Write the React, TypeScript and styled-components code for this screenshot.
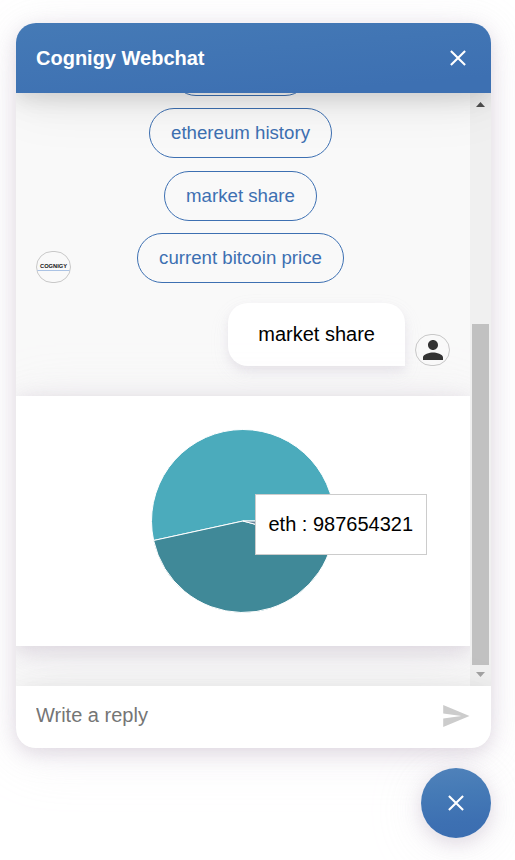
import React from "react";
import styled, { createGlobalStyle } from "styled-components";

const Global = createGlobalStyle`
  * { box-sizing: border-box; }
  body {
    margin: 0;
    background: #fff;
    overflow: hidden;
    font-family: "Liberation Sans", Arial, sans-serif;
    font-size: 20px;
    color: #000;
  }
`;

const Page = styled.div`
  height: 860px;
  padding: 23px 24px 22px 16px;
  display: flex;
  flex-direction: column;
  align-items: flex-end;
  gap: 20px;
`;

const ChatWindow = styled.section`
  width: 475px;
  height: 725px;
  display: flex;
  flex-direction: column;
  border-radius: 20px;
  overflow: hidden;
  background: #f9f9f9;
  box-shadow:
    0 5px 18px 0 rgba(151, 124, 156, 0.2),
    0 5px 32px 0 rgba(203, 195, 212, 0.2),
    0 8px 58px 0 rgba(216, 212, 221, 0.2);
`;

const Header = styled.header`
  position: relative;
  z-index: 2;
  height: 70px;
  flex: none;
  padding: 0 24.5px 0 20px;
  display: flex;
  align-items: center;
  justify-content: space-between;
  color: #fff;
  background: linear-gradient(175deg, #457ab6, #3d70b2 85%);
  box-shadow:
    0 5px 18px 0 rgba(0, 0, 0, 0.08),
    0 5px 32px 0 rgba(0, 0, 0, 0.08),
    0 8px 58px 0 rgba(0, 0, 0, 0.08);
`;

const Title = styled.h1`
  margin: 0;
  font-size: 20px;
  line-height: 24px;
`;

const IconButton = styled.button`
  border: 0;
  padding: 0;
  background: none;
  color: inherit;
  display: flex;
`;

const SendButton = styled(IconButton)`
  margin: 0 1px 2px 0;
`;

const Body = styled.div`
  height: 593px;
  flex: none;
  display: flex;
`;

const Messages = styled.div`
  width: 454px;
  padding-bottom: 40px;
  display: flex;
  flex-direction: column;
  justify-content: flex-end;
  overflow: hidden;
`;

const BotRow = styled.div`
  flex: none;
  padding-left: 20px;
  display: flex;
  align-items: flex-end;
`;

const QuickReplies = styled.div`
  flex: 1;
  padding-right: 70px;
  padding-left: 10px;
  display: flex;
  flex-direction: column;
  align-items: center;
  gap: 12.5px;
`;

const Reply = styled.button<{ $minWidth?: number }>`
  height: 50px;
  min-width: ${(p) => p.$minWidth ?? 0}px;
  padding: 0 21px;
  border: 1px solid #3d70b2;
  border-radius: 25px;
  background: transparent;
  color: #3d70b2;
  font: 18.667px "Liberation Sans", Arial, sans-serif;
  white-space: nowrap;
`;

const Avatar = styled.div`
  width: 35px;
  height: 32px;
  flex: none;
  display: flex;
  align-items: center;
  justify-content: center;
  border: 1px solid #c8c8c8;
  border-radius: 16px;
  overflow: hidden;
`;

const UserRow = styled.div`
  flex: none;
  margin: 20px 20px 30px 0;
  display: flex;
  align-items: flex-end;
  justify-content: flex-end;
  gap: 10px;
`;

const Bubble = styled.div`
  height: 63px;
  padding: 0 30px;
  border-radius: 20px 20px 0 20px;
  background: #fff;
  line-height: 63px;
  box-shadow:
    0 5px 9px 0 rgba(151, 124, 156, 0.1),
    0 5px 16px 0 rgba(203, 195, 212, 0.1),
    0 8px 20px 0 rgba(216, 212, 221, 0.1);
`;

const ChartCard = styled.div`
  position: relative;
  flex: none;
  height: 250px;
  padding-top: 33px;
  display: flex;
  align-items: flex-start;
  justify-content: center;
  background: #fff;
  box-shadow:
    0 5px 18px 0 rgba(151, 124, 156, 0.2),
    0 5px 32px 0 rgba(203, 195, 212, 0.2),
    0 8px 58px 0 rgba(216, 212, 221, 0.2);
`;

const Tooltip = styled.div`
  position: absolute;
  left: 239px;
  top: 98px;
  width: 172px;
  height: 61px;
  padding-left: 12.5px;
  border: 1px solid #ccc;
  background: #fff;
  line-height: 58px;
  white-space: nowrap;
`;

const Scrollbar = styled.div`
  width: 21px;
  padding: 9px 2px;
  display: flex;
  flex-direction: column;
  align-items: center;
  background: #f0f0f0;
`;

const Thumb = styled.div`
  width: 17px;
  height: 341px;
  margin: 217px 0 7px;
  background: #c1c1c1;
`;

const Composer = styled.form`
  position: relative;
  z-index: 1;
  height: 62px;
  flex: none;
  padding: 0 20px;
  display: flex;
  align-items: center;
  background: #fff;
  color: #ccc;
  box-shadow:
    0 5px 18px 0 rgba(0, 0, 0, 0.05),
    0 5px 32px 0 rgba(0, 0, 0, 0.05),
    0 8px 58px 0 rgba(0, 0, 0, 0.05);
`;

const ReplyInput = styled.input`
  flex: 1;
  min-width: 0;
  height: 24px;
  margin-bottom: 3px;
  padding: 0;
  border: 0;
  outline: 0;
  background: none;
  font: 20px "Liberation Sans", Arial, sans-serif;
  &::placeholder { color: #757575; opacity: 1; }
`;

const ToggleButton = styled.button`
  width: 70px;
  height: 70px;
  flex: none;
  padding: 0;
  border: 0;
  border-radius: 50%;
  display: flex;
  align-items: center;
  justify-content: center;
  color: #fff;
  background: linear-gradient(175deg, #5082ba, #457ab6 35%, #3d70b2 75%, #3b6db0);
  box-shadow:
    0 5px 18px 0 rgba(151, 124, 156, 0.2),
    0 5px 32px 0 rgba(203, 195, 212, 0.2),
    0 8px 58px 0 rgba(216, 212, 221, 0.2);
`;

const CloseIcon = () => (
  <svg width="18" height="18" viewBox="0 0 18 18" fill="none" stroke="currentColor" strokeWidth="2.1">
    <path d="M1.9 1.9 16.1 16.1M16.1 1.9 1.9 16.1" />
  </svg>
);

const Arrow = ({ down = false }: { down?: boolean }) => (
  <svg width="9" height="5" viewBox="0 0 9 5">
    <path d={down ? "M0 0H9L4.5 5Z" : "M0 5H9L4.5 0Z"} fill={down ? "#a3a3a3" : "#505050"} />
  </svg>
);

const RADIUS = 91.5;
const point = (deg: number) => {
  const a = (deg * Math.PI) / 180;
  return `${92 + RADIUS * Math.cos(a)} ${92 - RADIUS * Math.sin(a)}`;
};

const slices = [
  { from: 0, to: 192.3, color: "#4babbc" },
  { from: 192.3, to: 345, color: "#408998" },
  { from: 345, to: 360, color: "#68869c" },
];

const Pie = () => (
  <svg width="184" height="184" viewBox="0 0 184 184">
    {slices.map((s) => (
      <path
        key={s.from}
        d={`M92 92L${point(s.from)}A${RADIUS} ${RADIUS} 0 ${s.to - s.from > 180 ? 1 : 0} 0 ${point(s.to)}Z`}
        fill={s.color}
        stroke="#fff"
        strokeLinejoin="bevel"
      />
    ))}
  </svg>
);

export default function App() {
  return (
    <>
      <Global />
      <Page>
        <ChatWindow>
          <Header>
            <Title>Cognigy Webchat</Title>
            <IconButton aria-label="Close"><CloseIcon /></IconButton>
          </Header>
          <Body>
            <Messages>
              <BotRow>
                <Avatar>
                  <svg width="33" height="30" viewBox="0 0 33 30">
                    <text x="3" y="16" fontSize="5.2" fontWeight="700" fontFamily="Liberation Sans, Arial, sans-serif" textLength="27" lengthAdjust="spacingAndGlyphs" fill="#111">COGNIGY</text>
                    <path d="M0 18.5H33" stroke="#abc3e4" />
                  </svg>
                </Avatar>
                <QuickReplies>
                  <Reply $minWidth={139} />
                  <Reply>ethereum history</Reply>
                  <Reply>market share</Reply>
                  <Reply>current bitcoin price</Reply>
                </QuickReplies>
              </BotRow>
              <UserRow>
                <Bubble>market share</Bubble>
                <Avatar>
                  <svg width="20" height="20" viewBox="4 4 16 16" fill="#333">
                    <path d="M12 12c2.21 0 4-1.79 4-4s-1.79-4-4-4-4 1.79-4 4 1.79 4 4 4zm0 2c-2.67 0-8 1.34-8 4v2h16v-2c0-2.66-5.33-4-8-4z" />
                  </svg>
                </Avatar>
              </UserRow>
              <ChartCard>
                <Pie />
                <Tooltip>eth : 987654321</Tooltip>
              </ChartCard>
            </Messages>
            <Scrollbar>
              <Arrow />
              <Thumb />
              <Arrow down />
            </Scrollbar>
          </Body>
          <Composer>
            <ReplyInput placeholder="Write a reply" />
            <SendButton type="button" aria-label="Send">
              <svg width="28" height="24" viewBox="0 0 28 24" fill="currentColor">
                <path d="M1.2 1 27.5 12 1.2 23V14.5L19.5 12 1.2 9.5Z" />
              </svg>
            </SendButton>
          </Composer>
        </ChatWindow>
        <ToggleButton aria-label="Toggle chat"><CloseIcon /></ToggleButton>
      </Page>
    </>
  );
}
